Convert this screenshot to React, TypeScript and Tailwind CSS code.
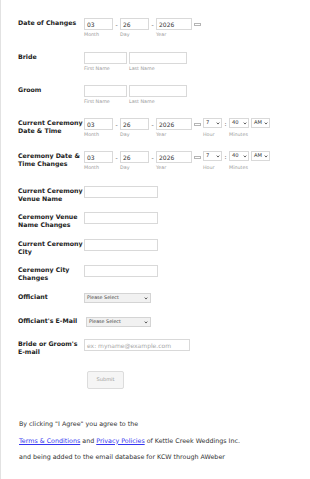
import { ReactNode } from 'react'

const font = { fontFamily: '"DejaVu Sans", Verdana, sans-serif' }

function Label({ children, className = '' }: { children: ReactNode; className?: string }) {
  return (
    <div className={`w-[66px] shrink-0 pt-[1px] text-[6.25px] font-bold leading-[8px] text-[#222] ${className}`}>
      {children}
    </div>
  )
}

function Sub({ children }: { children: ReactNode }) {
  return <div className="mt-[2px] text-[4.8px] leading-[5px] text-[#9a9a9a]">{children}</div>
}

function TextBox({ w, value = '', placeholder = '' }: { w: string; value?: string; placeholder?: string }) {
  return (
    <div
      className={`${w} flex h-[12px] items-center border border-[#d9d9d9] bg-white px-[2px] text-[6px] text-[#333]`}
    >
      {value ? value : <span className="text-[#a8a8a8]">{placeholder}</span>}
    </div>
  )
}

function Chevron() {
  return (
    <svg width="4" height="3" viewBox="0 0 10 8" className="shrink-0">
      <path d="M1.5 1.5 L5 5.5 L8.5 1.5" fill="none" stroke="#444" strokeWidth="2.2" />
    </svg>
  )
}

function MiniSelect({ w, value }: { w: string; value: string }) {
  return (
    <div
      className={`${w} flex h-[10px] items-center justify-between border border-[#d9d9d9] bg-white pl-[2px] pr-[1.5px] text-[5.2px] text-[#333]`}
    >
      <span>{value}</span>
      <Chevron />
    </div>
  )
}

function Dash({ ch = '-' }: { ch?: string }) {
  return <div className="flex h-[12px] w-[7px] items-center justify-center text-[6px] text-[#555]">{ch}</div>
}

function CalendarIcon() {
  return (
    <div className="flex h-[12px] w-[9px] items-center pl-[2px]">
      <div className="h-[3px] w-[7px] border border-[#b5b5b5]" />
    </div>
  )
}

function DateFields({ time = false }: { time?: boolean }) {
  return (
    <div className="flex items-start">
      <div>
        <TextBox w="w-[29px]" value="03" />
        <Sub>Month</Sub>
      </div>
      <Dash />
      <div>
        <TextBox w="w-[29px]" value="26" />
        <Sub>Day</Sub>
      </div>
      <Dash />
      <div>
        <TextBox w="w-[36px]" value="2026" />
        <Sub>Year</Sub>
      </div>
      <CalendarIcon />
      {time && (
        <>
          <div className="ml-[2px]">
            <div className="h-[12px]">
              <MiniSelect w="w-[19px]" value="7" />
            </div>
            <Sub>Hour</Sub>
          </div>
          <div className="flex h-[10px] w-[7px] items-center justify-center text-[6px] text-[#333]">:</div>
          <div>
            <div className="h-[12px]">
              <MiniSelect w="w-[20px]" value="40" />
            </div>
            <Sub>Minutes</Sub>
          </div>
          <div className="ml-[2px] h-[12px]">
            <MiniSelect w="w-[19px]" value="AM" />
          </div>
        </>
      )}
    </div>
  )
}

function NameFields() {
  return (
    <div className="flex items-start gap-[2px]">
      <div>
        <TextBox w="w-[43px]" />
        <Sub>First Name</Sub>
      </div>
      <div>
        <TextBox w="w-[58px]" />
        <Sub>Last Name</Sub>
      </div>
    </div>
  )
}

function PleaseSelect({ className = '' }: { className?: string }) {
  return (
    <div
      className={`flex h-[10px] items-center justify-between border border-[#d4d4d4] bg-[#f1f1f1] px-[2px] text-[4.8px] text-[#444] ${className}`}
    >
      <span>Please Select</span>
      <Chevron />
    </div>
  )
}

export default function App() {
  return (
    <div className="min-h-[479px] border-l border-[#e2e2e2] bg-white pl-[17px] pt-[18px]" style={font}>
      <div className="flex h-[34px] items-start">
        <Label>Date of Changes</Label>
        <DateFields />
      </div>

      <div className="flex h-[33px] items-start">
        <Label>Bride</Label>
        <NameFields />
      </div>

      <div className="flex h-[33px] items-start">
        <Label>Groom</Label>
        <NameFields />
      </div>

      <div className="flex h-[33px] items-start">
        <Label>
          Current Ceremony
          <br />
          Date &amp; Time
        </Label>
        <DateFields time />
      </div>

      <div className="flex h-[35px] items-start">
        <Label>
          Ceremony Date &amp;
          <br />
          Time Changes
        </Label>
        <DateFields time />
      </div>

      <div className="flex h-[26px] items-start">
        <Label>
          Current Ceremony
          <br />
          Venue Name
        </Label>
        <TextBox w="w-[74px]" />
      </div>

      <div className="flex h-[27px] items-start">
        <Label>
          Ceremony Venue
          <br />
          Name Changes
        </Label>
        <TextBox w="w-[74px]" />
      </div>

      <div className="flex h-[26px] items-start">
        <Label>
          Current Ceremony
          <br />
          City
        </Label>
        <TextBox w="w-[74px]" />
      </div>

      <div className="flex h-[27px] items-start">
        <Label>
          Ceremony City
          <br />
          Changes
        </Label>
        <TextBox w="w-[74px]" />
      </div>

      <div className="flex h-[24px] items-start">
        <Label className="pt-[1px]">Officiant</Label>
        <div className="pt-[1px]">
          <PleaseSelect className="w-[67px]" />
        </div>
      </div>

      <div className="flex h-[23px] items-start">
        <Label className="whitespace-nowrap pt-[1px]">Officiant&apos;s E-Mail</Label>
        <div className="pt-[1px]">
          <PleaseSelect className="ml-[2px] w-[65px]" />
        </div>
      </div>

      <div className="flex h-[32px] items-start">
        <Label>
          Bride or Groom&apos;s
          <br />
          E-mail
        </Label>
        <TextBox w="w-[106px]" placeholder="ex: myname@example.com" />
      </div>

      <div className="pl-[69px]">
        <button className="flex h-[18px] w-[37px] items-center justify-center rounded-[2px] border border-[#dcdcdc] bg-[#f5f5f5] text-[5.1px] text-[#a0a0a0]">
          Submit
        </button>
      </div>

      <div className="mt-[31px] pl-[1px] text-[6.35px] leading-[8px] text-[#333]">
        <p>By clicking &quot;I Agree&quot; you agree to the</p>
        <p className="mt-[8.5px]">
          <span className="text-[#3535f0] underline">Terms &amp; Conditions</span> and{' '}
          <span className="text-[#3535f0] underline">Privacy Policies</span> of Kettle Creek Weddings Inc.
        </p>
        <p className="mt-[8.5px]">and being added to the email database for KCW through AWeber</p>
      </div>
    </div>
  )
}
